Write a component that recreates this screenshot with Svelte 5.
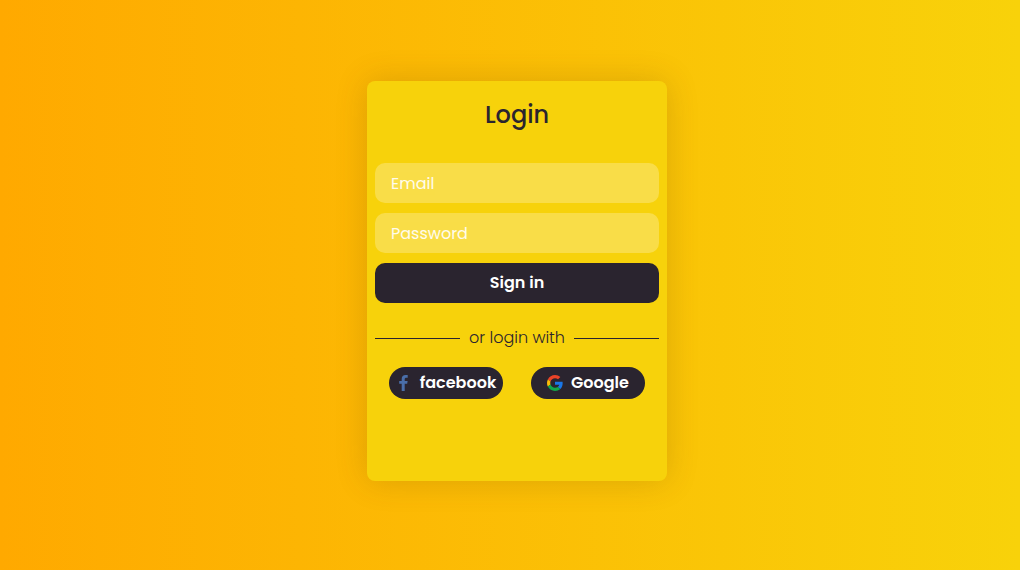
<script>
  let email = $state('');
  let password = $state('');
</script>

<main class="page">
  <section class="card" aria-labelledby="title">
    <h1 id="title">Login</h1>

    <form class="form" onsubmit={(event) => event.preventDefault()}>
      <input type="email" placeholder="Email" aria-label="Email" bind:value={email} />
      <input type="password" placeholder="Password" aria-label="Password" bind:value={password} />
      <button class="submit" type="submit">Sign in</button>
    </form>

    <div class="divider">
      <span class="line"></span>
      <span>or login with</span>
      <span class="line"></span>
    </div>

    <div class="social">
      <button type="button" class="pill facebook">
        <svg width="16" height="16" viewBox="0 0 16 16" aria-hidden="true">
          <path
            fill="#4a6ea9"
            d="M5.700 16V8.800H3.200V5.900h2.500V3.900C5.700 1.400 7.200 0 9.500 0c1.100 0 2.200.1 2.200.1v2.700h-1.300C9.200 2.800 8.700 3.400 8.700 4.200v1.700h2.900l-.4 2.900H8.700V16z"
          />
        </svg>
        <span>facebook</span>
      </button>
      <button type="button" class="pill google">
        <svg width="16" height="16" viewBox="0 0 48 48" aria-hidden="true">
          <path fill="#ea4328" d="M24 9.500c3.540 0 6.710 1.220 9.210 3.600l6.850-6.850C35.900 2.380 30.470 0 24 0 14.620 0 6.510 5.380 2.560 13.220l7.980 6.190C12.430 13.720 17.740 9.500 24 9.500z" />
          <path fill="#1a76e8" d="M46.980 24.550c0-1.570-.15-3.090-.38-4.550H24v9.020h12.940c-.58 2.960-2.260 5.480-4.780 7.180l7.730 6c4.510-4.180 7.090-10.360 7.090-17.650z" />
          <path fill="#fbbc05" d="M10.530 28.590A14.500 14.500 0 0 1 9.770 24c0-1.600.27-3.140.76-4.590l-7.980-6.190A23.900 23.900 0 0 0 0 24c0 3.880.92 7.540 2.560 10.780z" />
          <path fill="#12a84a" d="M24 48c6.480 0 11.930-2.130 15.890-5.810l-7.730-6c-2.150 1.450-4.920 2.300-8.160 2.300-6.260 0-11.570-4.220-13.470-9.910l-7.980 6.190C6.510 42.620 14.620 48 24 48z" />
        </svg>
        <span>Google</span>
      </button>
    </div>
  </section>
</main>

<style>
  :global(body) {
    margin: 0;
  }

  .page {
    --ink: #2a242f;
    display: flex;
    align-items: center;
    justify-content: center;
    box-sizing: border-box;
    min-height: 100vh;
    padding: 0 0 8px 14px;
    background: linear-gradient(to right, #ffa900, #f8d20a);
    color: var(--ink);
    font: 400 16px/24px Poppins, Inter, sans-serif;
  }

  .card {
    box-sizing: border-box;
    width: 100%;
    max-width: 300px;
    min-height: 400px;
    padding: 16px 8px;
    border-radius: 8px;
    background: #f7d20b;
    box-shadow: 0 0 32px rgba(90, 60, 0, 0.2);
  }

  h1 {
    margin: 0 0 30px;
    font-size: 24px;
    font-weight: 500;
    line-height: 36px;
    text-align: center;
  }

  .form {
    display: grid;
    gap: 10px;
  }

  input,
  button {
    box-sizing: border-box;
    border: 0;
    font: inherit;
  }

  input {
    width: 100%;
    height: 40px;
    padding: 0 16px;
    border-radius: 10px;
    outline: 0;
    background: rgba(255, 255, 255, 0.25);
    color: var(--ink);
  }

  input::placeholder {
    color: #fff;
    opacity: 0.9;
  }

  button {
    background: var(--ink);
    color: #fff;
    font-weight: 600;
    cursor: pointer;
  }

  .submit {
    height: 40px;
    border-radius: 10px;
  }

  .divider {
    display: flex;
    align-items: center;
    justify-content: space-between;
    margin: 23px 0 17px;
    font-weight: 300;
  }

  .line {
    width: 30%;
    height: 1px;
    background: var(--ink);
  }

  .social {
    display: flex;
    justify-content: space-around;
  }

  .pill {
    display: flex;
    align-items: center;
    justify-content: center;
    gap: 8px;
    width: 40%;
    height: 32px;
    padding: 0;
    border-radius: 16px;
  }
</style>
